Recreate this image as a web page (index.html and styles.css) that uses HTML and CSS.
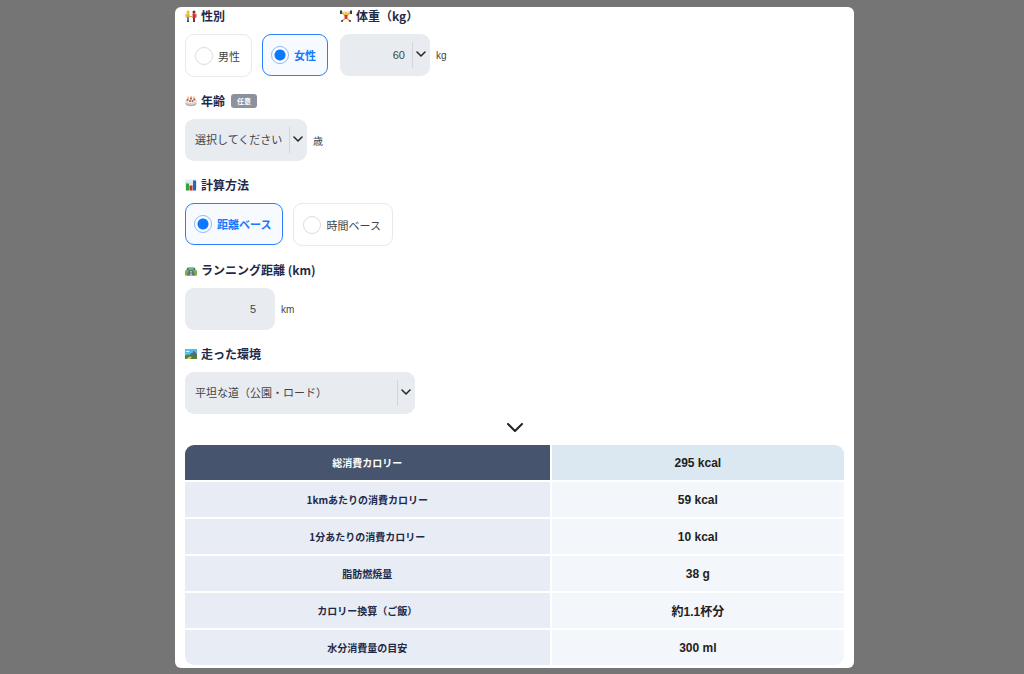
FILE: index.html
```html
<!DOCTYPE html>
<html lang="ja">
<head>
<meta charset="utf-8">
<meta name="viewport" content="width=device-width, initial-scale=1">
<title>消費カロリー計算</title>
<link rel="stylesheet" href="styles.css">
</head>
<body>
<main class="card">
  <form class="form">
    <div class="row">
      <fieldset class="group group-gender">
        <legend class="label">
          <svg class="emoji" viewBox="0 0 24 24" aria-hidden="true"><circle cx="6" cy="4" r="3" fill="#efb52d"/><circle cx="18" cy="4" r="3" fill="#6b3520"/><path d="M3 7h6v8H3z" fill="#f3b12b"/><path d="M4 14h4v8H4z" fill="#4f8bc4"/><path d="M1 8h2v7H1z" fill="#e0a33a"/><path d="M15 7h6v9h-6z" fill="#d92b2b"/><path d="M16 15h4v7h-4z" fill="#a62c28"/><path d="M21 8h2v7h-2z" fill="#8a4a2a"/><path d="M9 12h6v2H9z" fill="#dfa04a"/><path d="M4 21h4v3H4zM16 21h4v3h-4z" fill="#3c4150"/></svg>
          <span>性別</span>
        </legend>
        <div class="options">
          <label class="option"><input class="radio" type="radio" name="gender"><span>男性</span></label>
          <label class="option"><input class="radio" type="radio" name="gender" checked><span>女性</span></label>
        </div>
      </fieldset>
      <div class="group">
        <label class="label" for="weight">
          <svg class="emoji" viewBox="0 0 24 24" aria-hidden="true"><path d="M3 4h18" stroke="#999" stroke-width="1"/><path d="M0 1h4v7H0zM20 1h4v7h-4z" fill="#333b47"/><path d="M4 5l6 6M20 5l-6 6" stroke="#e8a52b" stroke-width="3"/><circle cx="12" cy="7" r="3" fill="#f3b833"/><path d="M9 10h6v8H9z" fill="#df302c"/><path d="M10 17l-6 5M14 17l6 5" stroke="#e8a52b" stroke-width="3"/><path d="M2 22h4M18 22h4" stroke="#333b47" stroke-width="3"/></svg>
          <span>体重（kg）</span>
        </label>
        <div class="field">
          <div class="select-box size-s">
            <select class="control select number" id="weight"><option>60</option></select>
            <svg class="caret" viewBox="0 0 10 10" aria-hidden="true"><path d="M1 3l4 4 4-4"/></svg>
          </div>
          <span class="unit">kg</span>
        </div>
      </div>
    </div>

    <div class="group">
      <label class="label" for="age">
        <svg class="emoji" viewBox="0 0 24 24" aria-hidden="true"><path d="M1 10v8c0 6 22 6 22 0v-8z" fill="#d9d3cf"/><path d="M2 17c2 5 18 5 20 0" fill="none" stroke="#a89c95" stroke-width="2"/><ellipse cx="12" cy="10" rx="11" ry="6" fill="#f3eee9"/><path d="M6 3v7M12 2v7M18 3v7" stroke="#dba066" stroke-width="2"/><circle cx="5" cy="10" r="2" fill="#b9524c"/><circle cx="10" cy="12" r="2" fill="#b9524c"/><circle cx="15" cy="12" r="2" fill="#b9524c"/><circle cx="19" cy="9" r="2" fill="#b9524c"/><circle cx="12" cy="7" r="2" fill="#b9524c"/></svg>
        <span>年齢</span><span class="badge">任意</span>
      </label>
      <div class="field">
        <div class="select-box size-m">
          <select class="control select" id="age"><option>選択してください</option></select>
          <svg class="caret" viewBox="0 0 10 10" aria-hidden="true"><path d="M1 3l4 4 4-4"/></svg>
        </div>
        <span class="unit">歳</span>
      </div>
    </div>

    <fieldset class="group">
      <legend class="label">
        <svg class="emoji" viewBox="0 0 24 24" aria-hidden="true"><path d="M0 1h24v22H0z" fill="#e4edf1"/><path d="M0 8h24M0 15h24" stroke="#c0ced6"/><path d="M2 9h6v14H2z" fill="#29a834"/><path d="M9 13h6v10H9z" fill="#c82c2c"/><path d="M16 3h6v20h-6z" fill="#2866b9"/></svg>
        <span>計算方法</span>
      </legend>
      <div class="options">
        <label class="option"><input class="radio" type="radio" name="method" checked><span>距離ベース</span></label>
        <label class="option"><input class="radio" type="radio" name="method"><span>時間ベース</span></label>
      </div>
    </fieldset>

    <div class="group">
      <label class="label" for="distance">
        <svg class="emoji" viewBox="0 0 24 24" aria-hidden="true"><path d="M0 13h24v10H0z" fill="#6dbb3c"/><path d="M8 12h8l5 11H3z" fill="#6b737b"/><path d="M12 14v3M12 19v4" stroke="#fff" stroke-width="2"/><path d="M5 7h14l3 6H2z" fill="#35865b"/><path d="M7 10h10" stroke="#b8dfc8" stroke-width="2"/></svg>
        <span>ランニング距離 (km)</span>
      </label>
      <div class="field">
        <input class="control number size-s" id="distance" type="text" inputmode="decimal" value="5">
        <span class="unit">km</span>
      </div>
    </div>

    <div class="group">
      <label class="label" for="place">
        <svg class="emoji" viewBox="0 0 24 24" aria-hidden="true"><path d="M0 2h24v20H0z" fill="#54bde9"/><path d="M1 8c3-4 6-3 9 0z" fill="#eaf7fb"/><path d="M9 17l2-6 4-1 2-5 7 7v7z" fill="#59697a"/><path d="M0 15l7-2 6 3 11-1v7H0z" fill="#4f8238"/><path d="M2 22l7-5 5 1-4 4z" fill="#e4c863"/></svg>
        <span>走った環境</span>
      </label>
      <div class="field">
        <div class="select-box size-l">
          <select class="control select" id="place"><option>平坦な道（公園・ロード）</option></select>
          <svg class="caret" viewBox="0 0 10 10" aria-hidden="true"><path d="M1 3l4 4 4-4"/></svg>
        </div>
      </div>
    </div>
  </form>

  <svg class="arrow" viewBox="0 0 16 10" aria-hidden="true"><path d="M1 1l7 7 7-7"/></svg>

  <table class="result">
    <tbody>
      <tr class="total"><th scope="row">総消費カロリー</th><td>295 kcal</td></tr>
      <tr><th scope="row">1kmあたりの消費カロリー</th><td>59 kcal</td></tr>
      <tr><th scope="row">1分あたりの消費カロリー</th><td>10 kcal</td></tr>
      <tr><th scope="row">脂肪燃焼量</th><td>38 g</td></tr>
      <tr><th scope="row">カロリー換算（ご飯）</th><td>約1.1杯分</td></tr>
      <tr><th scope="row">水分消費量の目安</th><td>300 ml</td></tr>
    </tbody>
  </table>
</main>
</body>
</html>
```
FILE: styles.css
```css
* {
  box-sizing: border-box;
}

body {
  margin: 0;
  padding: 7px 170px 6px 175px;
  background: #757575;
  color: #444;
  font-family: "Liberation Sans", "Noto Sans CJK JP", sans-serif;
  font-size: 11px;
}

.card {
  padding: 0 10px 3px;
  border-radius: 6px;
  background: #fff;
}

.form {
  display: flex;
  flex-direction: column;
  gap: 15px;
}

.row {
  display: flex;
  gap: 12px;
}

.group {
  min-width: 0;
  margin: 0;
  padding: 0;
  border: 0;
}

.label {
  display: flex;
  align-items: center;
  gap: 4px;
  height: 18px;
  margin-bottom: 9px;
  padding: 0;
  color: #1e2a4a;
  font-family: "Noto Sans CJK JP", sans-serif;
  font-size: 12px;
  font-weight: 700;
  line-height: 18px;
}

.emoji {
  flex: none;
  width: 12px;
  height: 12px;
}

.badge {
  margin-left: 2px;
  padding: 0 6px;
  border-radius: 3px;
  background: #8b929d;
  color: #fff;
  font-size: 7px;
  line-height: 14px;
}

.options {
  display: flex;
  align-items: flex-start;
  gap: 10px;
}

.option {
  display: flex;
  align-items: center;
  gap: 5px;
  height: 43px;
  padding: 0 11px 0 9px;
  border: 1px solid #e9e9eb;
  border-radius: 9px;
}

.option:has(:checked) {
  height: 42px;
  padding: 0 11px 0 8px;
  border-color: #2b7fff;
  background: #f7faff;
  color: #117aff;
  font-weight: 700;
}

.radio {
  appearance: none;
  width: 18px;
  height: 18px;
  margin: 0;
  border: 1px solid #ddd;
  border-radius: 50%;
  background: #fff;
}

.radio:checked {
  border-color: #8fb9f5;
  background: radial-gradient(circle, #0a78ff 5px, #fff 6px);
}

.field {
  display: flex;
  align-items: center;
  gap: 6px;
}

.unit {
  font-size: 10px;
}

.control {
  width: 100%;
  height: 42px;
  padding: 0 10px;
  border: 0;
  border-radius: 9px;
  background: #e8ebf0;
  color: #444;
  font: inherit;
}

.select {
  appearance: none;
}

.number {
  padding-right: 19px;
  text-align: right;
}

.select.number {
  padding-right: 25px;
  text-align-last: right;
}

.select-box {
  position: relative;
}

.select-box::after {
  content: "";
  position: absolute;
  top: 8px;
  right: 17px;
  bottom: 8px;
  border-left: 1px solid #d2d5da;
}

.size-s {
  width: 90px;
}

.size-m {
  width: 122px;
}

.size-l {
  width: 230px;
}

.caret {
  position: absolute;
  top: 15px;
  right: 4px;
  width: 10px;
  height: 10px;
  pointer-events: none;
}

.caret path,
.arrow path {
  fill: none;
  stroke: #222;
  stroke-width: 1.5;
  stroke-linecap: round;
  stroke-linejoin: round;
}

.arrow path {
  stroke-width: 2;
}

.arrow {
  display: block;
  width: 16px;
  height: 10px;
  margin: 9px auto 12px;
}

.result {
  width: calc(100% + 4px);
  margin: -2px;
  border-collapse: separate;
  border-spacing: 2px;
  table-layout: fixed;
}

.result th,
.result td {
  height: 35px;
  padding: 0;
  font-weight: 700;
  text-align: center;
}

.result th {
  width: 55.5%;
  background: #e8ecf5;
  color: #1e2a4a;
  font-family: "Noto Sans CJK JP", sans-serif;
  font-size: 10px;
}

.result td {
  background: #f3f6fa;
  color: #222;
  font-size: 12px;
}

.result .total th {
  border-top-left-radius: 9px;
  background: #47546d;
  color: #fff;
}

.result .total td {
  border-top-right-radius: 9px;
  background: #dbe8f1;
}

.result tr:last-child th {
  border-bottom-left-radius: 9px;
}

.result tr:last-child td {
  border-bottom-right-radius: 9px;
}
```
